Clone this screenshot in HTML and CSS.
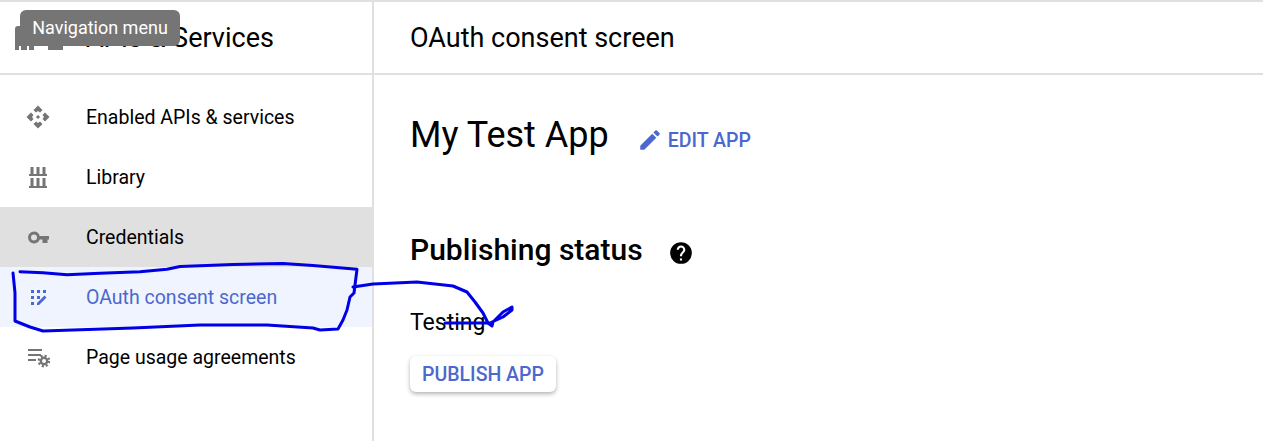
FILE: index.html
```html
<!DOCTYPE html>
<html lang="en">
<head>
<meta charset="UTF-8" />
<title>OAuth consent screen</title>
<link rel="stylesheet" href="styles.css">
</head>
<body>

<div class="page">
  <div class="sidebar">
    <div class="side-header">
      <svg class="logo" viewBox="0 0 48 24" width="48" height="24"><path fill="#757575" d="M0 3q0-3 3-3h42q3 0 3 3v21H33v-4H19v4h-5v-4h-2v4H6v-4H4v4H0z"/></svg>
      <span class="side-title">APIs &amp; Services</span>
    </div>
    <nav class="nav">
      <a class="nav-item">
        <svg class="nav-icon" viewBox="0 0 24 24"><path d="M12 .5L16.500 5 14 7.500 12 6 10 7.500 7.500 5zM.5 12L5 7.500 7.500 10 6 12l1.500 2L5 16.500zM23.500 12L19 7.500 16.500 10l1.500 2-1.500 2 2.500 2.500zM12 23.500L7.500 19 10 16.500l2 1.500 2-1.500 2.500 2.500z"/><rect x="10.500" y="10.500" width="3" height="3" transform="rotate(45 12 12)"/></svg>
        <span>Enabled APIs &amp; services</span>
      </a>
      <a class="nav-item">
        <svg class="nav-icon" viewBox="0 0 24 24"><path d="M4.500 2h3v7h-3zM10.500 2h3v7h-3zM16.500 2h3v7h-3zM3 9h18v2H3zM4.500 13h3v8h-3zM10.500 13h3v8h-3zM16.500 13h3v8h-3zM3 21h18v2H3z"/></svg>
        <span>Library</span>
      </a>
      <a class="nav-item nav-item-hover">
        <svg class="nav-icon" viewBox="0 0 24 24"><path fill-rule="evenodd" d="M8 6.500a6 6 0 0 1 5.700 4.500H23v3.500h-1.500V18h-5v-3.500h-2.800A6 6 0 1 1 8 6.500zm0 3a3 3 0 1 0 0 6 3 3 0 0 0 0-6z"/></svg>
        <span>Credentials</span>
      </a>
      <a class="nav-item nav-item-active">
        <svg class="nav-icon" viewBox="0 0 24 24"><path d="M5 5h3v3H5zM11 5h3v3h-3zM17 5h3v3h-3zM5 11h3v3H5zM11 11h3v3h-3zM5 17h3v3H5zM11 18l7.500-7.500 2 2L13 20h-2z"/></svg>
        <span>OAuth consent screen</span>
      </a>
      <a class="nav-item">
        <svg class="nav-icon" viewBox="0 0 24 24"><path d="M2 4h14v2H2zM2 9h13v2H2zM2 14h8v2H2z"/><circle cx="18" cy="16" r="3.200" fill="none" stroke="#757575" stroke-width="2.400"/><circle cx="18" cy="16" r="5.200" fill="none" stroke="#757575" stroke-width="2.400" stroke-dasharray="2.040 2.040"/></svg>
        <span>Page usage agreements</span>
      </a>
    </nav>
  </div>

  <div class="content">
    <div class="content-header">OAuth consent screen</div>
    <div class="content-body">
      <div class="app-row">
        <h1 class="app-name">My Test App</h1>
        <a class="edit-link">
          <svg class="edit-icon" viewBox="0 0 24 24"><path d="M3 17.250V21h3.750L17.810 9.940l-3.750-3.750zM20.710 7.040a1 1 0 0 0 0-1.410l-2.340-2.340a1 1 0 0 0-1.410 0l-1.830 1.830 3.750 3.750z"/></svg>
          EDIT APP
        </a>
      </div>
      <div class="status-row">
        <h2 class="status-title">Publishing status</h2>
        <svg class="help-icon" viewBox="0 0 24 24"><path d="M12 2a10 10 0 1 0 0 20 10 10 0 0 0 0-20zm1 17h-2v-2h2zm2.070-7.750l-.9.920C13.450 12.900 13 13.500 13 15h-2v-.500c0-1.100.450-2.100 1.170-2.830l1.240-1.260A2 2 0 1 0 10 9H8a4 4 0 1 1 8 0c0 .880-.360 1.680-.930 2.250z"/></svg>
      </div>
      <div class="status-value">Testing</div>
      <button class="publish-btn">PUBLISH APP</button>
    </div>
  </div>
</div>

<div class="tooltip">Navigation menu</div>

<!-- hand drawn annotation on top of the screenshot -->
<svg class="ink" viewBox="0 0 1263 441" width="1263" height="441">
  <path d="M20 271.700L43 272.700L67 274.700L100 273.300L140 271.700L167 269.300L180 266.500L233 264.500L283 263.500L313 265.500L357 269.300L354 293L350 297L347 310L343 320L338 329L320 330L313 328L267 325L200 325L133 328L43 331L30 327L15 321L15 293L13 273"/>
  <path d="M353 287L373 284L417 282L453 286L467 292L475 302L483 313L488 323L492 326L493 322L503 312L512 307L512 310L503 317L492 322"/>
  <path d="M445 323L492 323"/>
</svg>

</body>
</html>
```

FILE: styles.css
```css
body {
  margin: 0;
  height: 441px;
  overflow: hidden;
  background: #fff;
  font-family: Roboto, Arial, sans-serif;
  color: #000;
}

.page {
  display: flex;
  height: 439px;
  border-top: 2px solid #e0e0e0;
}

.sidebar {
  width: 372px;
  flex-shrink: 0;
  border-right: 2px solid #e0e0e0;
}

.side-header {
  height: 71px;
  display: flex;
  align-items: center;
  border-bottom: 2px solid #e0e0e0;
  padding-left: 15px;
}
.logo {
  margin-right: 23px;
}
.side-title {
  font-size: 27px;
}

.nav {
  padding-top: 12px;
}

.nav-item {
  height: 60px;
  display: flex;
  align-items: center;
  padding-left: 26px;
  font-size: 19.500px;
  color: #000;
}
.nav-item-hover {
  background: #e0e0e0;
}
.nav-item-active {
  background: #eff4fe;
  color: #4c68cf;
}
.nav-item-active .nav-icon {
  fill: #4c68cf;
}

.nav-icon {
  width: 24px;
  height: 24px;
  margin-right: 36px;
  fill: #757575;
  flex-shrink: 0;
}

.content {
  flex: 1;
}

.content-header {
  height: 71px;
  display: flex;
  align-items: center;
  padding-left: 36px;
  font-size: 27px;
  border-bottom: 2px solid #e0e0e0;
}

.content-body {
  padding: 36px 36px 0;
}

.app-row {
  display: flex;
  align-items: center;
}
.app-name {
  margin: 0;
  font-size: 36px;
  font-weight: 400;
  line-height: 48px;
}
.edit-link {
  display: flex;
  align-items: center;
  margin: 10px 0 0 28px;
  color: #4c68cf;
  font-size: 19.500px;
  font-weight: 500;
}
.edit-icon {
  width: 26px;
  height: 26px;
  margin-right: 5px;
  fill: #4c68cf;
}

.status-row {
  display: flex;
  align-items: center;
  margin-top: 71px;
}
.status-title {
  margin: 0;
  font-size: 30px;
  font-weight: 500;
  line-height: 40px;
}
.help-icon {
  width: 26px;
  height: 26px;
  margin: 6px 0 0 25px;
  fill: #000;
}

.status-value {
  margin-top: 39px;
  font-size: 23px;
  line-height: 28px;
}

.publish-btn {
  display: block;
  margin-top: 19px;
  width: 146px;
  height: 36px;
  padding: 0;
  border: none;
  border-radius: 6px;
  background: #fff;
  color: #4c68cf;
  font-family: inherit;
  font-size: 19.500px;
  font-weight: 500;
  box-shadow: 0 2px 4px rgba(0,0,0,0.3);
}

.tooltip {
  position: absolute;
  left: 20px;
  top: 10px;
  width: 160px;
  height: 36px;
  line-height: 36px;
  text-align: center;
  background: #757575;
  border-radius: 6px;
  color: #fff;
  font-size: 18px;
}

.ink {
  position: absolute;
  left: 0;
  top: 0;
  fill: none;
  stroke: #0000e6;
  stroke-width: 3;
  stroke-linejoin: round;
  stroke-linecap: round;
}
```
